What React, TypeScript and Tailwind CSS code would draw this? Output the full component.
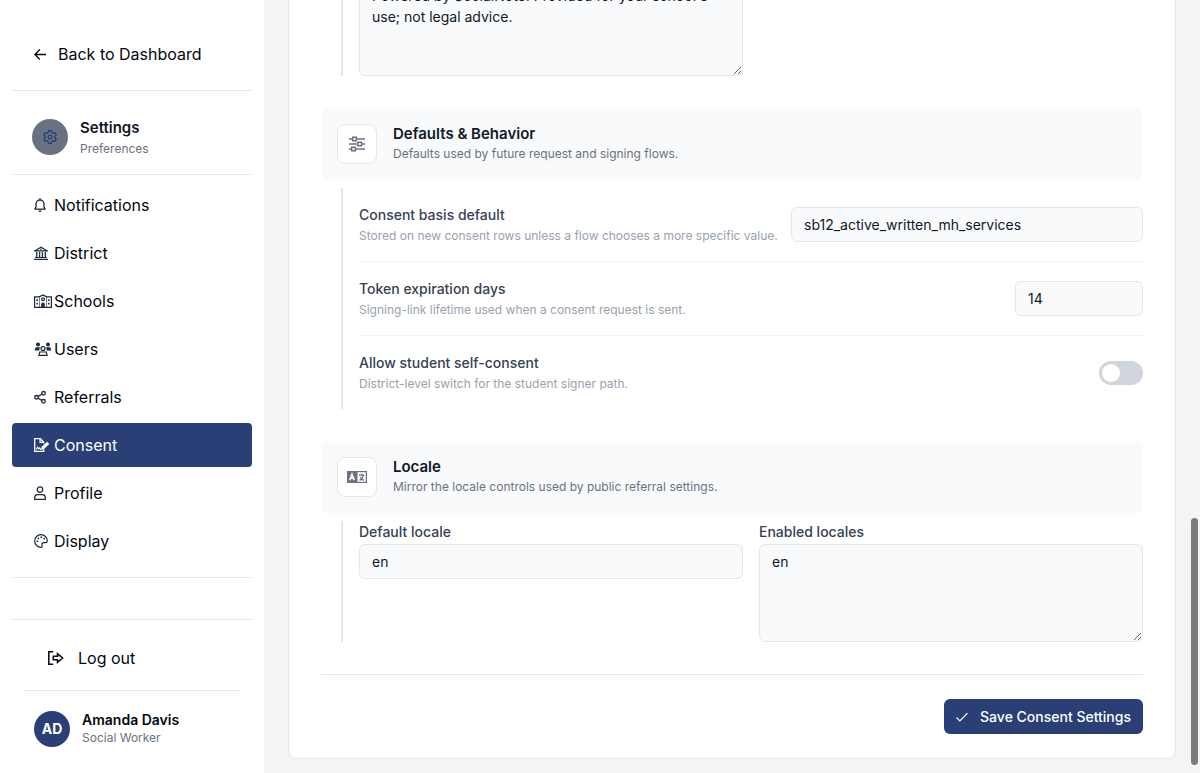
import { useLayoutEffect, useRef, type ReactNode } from 'react';
import { clsx } from 'clsx';

interface IconProps {
  width?: number;
  height?: number;
  strokeWidth?: number;
  children: ReactNode;
}

function Icon({ width = 14, height = 14, strokeWidth = 1.2, children }: IconProps) {
  return (
    <svg
      width={width}
      height={height}
      viewBox={`0 0 ${width} ${height}`}
      fill="none"
      stroke="currentColor"
      strokeWidth={strokeWidth}
      className="shrink-0"
      aria-hidden="true"
    >
      {children}
    </svg>
  );
}

const ArrowLeftIcon = () => (
  <Icon width={12} strokeWidth={1.3}>
    <path d="M12 7.5H1M5.8 2.5L.9 7.5l4.9 5" />
  </Icon>
);

const GearIcon = () => (
  <Icon strokeWidth={1.3}>
    <path
      strokeLinejoin="round"
      d="M5.6.7h2.8l.4 1.8 1.2.7 1.8-.6 1.4 2.4-1.4 1.3v1.4l1.4 1.3-1.4 2.4-1.8-.6-1.2.7-.4 1.8H5.6l-.4-1.8-1.2-.7-1.8.6L.8 9l1.4-1.3V6.3L.8 5l1.4-2.4 1.8.6 1.2-.7z"
    />
    <circle cx="7" cy="7" r="1.9" />
  </Icon>
);

const BellIcon = () => (
  <Icon width={12} strokeWidth={1.3}>
    <path d="M6 .2v1.500" />
    <path d="M.8 11.200h10.400L10 9.200V6a4 4 0 0 0-8 0v3.200z" strokeLinejoin="round" />
    <path d="M4.500 12.500h3a1.500 1.500 0 0 1-3 0z" fill="currentColor" stroke="none" />
  </Icon>
);

const BankIcon = () => (
  <Icon strokeWidth={1.2}>
    <path d="M1 4.800L7 1.300l6 3.500zM0 4.900h14M1.200 11.500h11.600M0 13.300h14" />
    <path d="M2.700 6v5M5.600 6v5M8.400 6v5M11.300 6v5" strokeWidth="1.300" />
    <circle cx="7" cy="3.300" r=".8" fill="currentColor" stroke="none" />
  </Icon>
);

const SchoolIcon = () => (
  <Icon width={18} strokeWidth={1.2}>
    <path d="M.6 2.800h4.600L9 .9l3.800 1.900h4.600v10.600H.6z" />
    <path d="M5.500 3v10.200M12.500 3v10.200" strokeWidth=".6" />
    <circle cx="9" cy="5.200" r="1.400" />
    <path d="M3.200 5.200v1.700M3.200 8.800v1.700M14.800 5.200v1.700M14.800 8.800v1.700" strokeWidth="1.500" />
    <path d="M7.200 13.400v-3a1.800 1.800 0 0 1 3.600 0v3z" fill="currentColor" stroke="none" />
  </Icon>
);

const UsersIcon = () => (
  <Icon width={18} strokeWidth={1.2}>
    <g fill="currentColor" stroke="none">
      <circle cx="4" cy="2.500" r="2" />
      <circle cx="14" cy="2.500" r="2" />
      <path d="M.6 8.500l1.100-3.300h3.800l.4.500-.8 2.800zM17.400 8.500l-1.100-3.300h-3.800l-.4.500.8 2.800z" />
    </g>
    <circle cx="9" cy="6.600" r="2" />
    <path d="M5.700 10h6.600l.8 3.300H4.900z" />
  </Icon>
);

const ShareIcon = () => (
  <Icon width={12} strokeWidth={1.3}>
    <circle cx="2.500" cy="7.300" r="1.800" />
    <circle cx="9.500" cy="3.300" r="1.800" />
    <circle cx="9.500" cy="11.300" r="1.800" />
    <path d="M4.100 6.400l3.700-2.200M4.100 8.200l3.700 2.200" />
  </Icon>
);

const ConsentIcon = () => (
  <Icon width={16} strokeWidth={1.300}>
    <path d="M9.700 11.200v2.100H.7V.7h5.600l3.400 3.400v1.500" />
    <path d="M6.100.7v3.600h3.600" />
    <path d="M2.300 11.400l1.300-2.200 1.200 1.700.9-1 .9 1.200h2" strokeWidth="1.100" />
    <path d="M7.600 8.700l5.600-4.900 2.100 2.100-5.400 5.100-2.300.3z" fill="currentColor" stroke="none" />
  </Icon>
);

const ProfileIcon = () => (
  <Icon width={12} strokeWidth={1.3}>
    <circle cx="6" cy="3.600" r="2.700" />
    <path d="M.7 13.300V12c0-2 1-3.400 2.600-3.400h5.400c1.600 0 2.600 1.400 2.600 3.400v1.300z" />
  </Icon>
);

const PaletteIcon = () => (
  <Icon strokeWidth={1.2}>
    <path d="M7 .7a6.300 6.300 0 1 0 0 12.600c1.300 0 1.400-1 1-2-.5-1.500.3-2.600 1.800-2.600h1.900c1 0 1.600-.6 1.600-1.700C13.300 3.400 10.500.7 7 .7z" />
    <g fill="currentColor" stroke="none">
      <circle cx="3.400" cy="7.300" r=".9" />
      <circle cx="4.400" cy="4.400" r=".9" />
      <circle cx="7.300" cy="3.200" r=".9" />
      <circle cx="10.200" cy="4.700" r=".9" />
    </g>
  </Icon>
);

const LogoutIcon = () => (
  <Icon width={16} strokeWidth={1.5}>
    <path d="M5.200.8H.8v12.400h4.400" />
    <path d="M5.300 5.300h4.200V2.700L14.600 7l-5.100 4.300V8.700H5.300z" />
  </Icon>
);

const SlidersIcon = () => (
  <Icon width={18} height={16} strokeWidth={1.5}>
    <path d="M1 3h3.500M8.500 3H17M1 8h8.500M13.500 8H17M1 13h2.500M7.500 13H17" />
    <path d="M4.700 1.200h3.600v3.600H4.700zM9.900 6.200h3.600v3.600H9.900zM3.700 11.200h3.600v3.600H3.700z" />
  </Icon>
);

const LocaleIcon = () => (
  <Icon width={20} height={12} strokeWidth={1.2}>
    <path d="M0 0h20v12H0z" fill="currentColor" stroke="none" />
    <path d="M10.500 1.200h8.300v9.600h-8.300z" fill="#fff" stroke="none" />
    <path d="M2.700 9.200L5 3.200l2.300 6M3.500 7.300h3" stroke="#fff" strokeWidth="1.500" />
    <path d="M14.700 2.400v1.400M12 4.100h5.400M12.600 9.400c2-1 3.300-2.700 3.700-5.200M13.300 6c.7 1.600 2 2.800 3.700 3.400" />
  </Icon>
);

const CheckIcon = () => (
  <Icon width={12} strokeWidth={1.2}>
    <path d="M.5 7.500l3.400 3.400L11.500 3.200" />
  </Icon>
);

const navItems = [
  { label: 'Notifications', icon: <BellIcon /> },
  { label: 'District', icon: <BankIcon /> },
  { label: 'Schools', icon: <SchoolIcon /> },
  { label: 'Users', icon: <UsersIcon /> },
  { label: 'Referrals', icon: <ShareIcon /> },
  { label: 'Consent', icon: <ConsentIcon />, active: true },
  { label: 'Profile', icon: <ProfileIcon /> },
  { label: 'Display', icon: <PaletteIcon /> },
];

function Sidebar() {
  return (
    <aside className="flex w-66 shrink-0 flex-col overflow-y-auto bg-white px-3 pt-8">
      <div className="border-b border-gray-200 pb-3.5">
        <a href="#dashboard" className="flex h-11 items-center gap-3 pl-[22px] text-gray-950">
          <ArrowLeftIcon />
          Back to Dashboard
        </a>
      </div>

      <div className="flex h-21 items-center gap-3 border-b border-gray-200 pt-2 pl-5">
        <div className="flex size-9 items-center justify-center rounded-full bg-gray-500 text-[#293f75]">
          <GearIcon />
        </div>
        <div className="pt-0.5">
          <div className="text-[15px] leading-[21px] font-semibold text-gray-900">Settings</div>
          <div className="text-xs leading-[21px] text-gray-500">Preferences</div>
        </div>
      </div>

      <nav className="flex flex-col gap-1 border-b border-gray-200 pt-2 pb-3.5">
        {navItems.map((item) => (
          <a
            key={item.label}
            href={`#${item.label.toLowerCase()}`}
            aria-current={item.active ? 'page' : undefined}
            className={clsx(
              'flex h-11 items-center rounded pl-[22px]',
              item.active ? 'bg-[#293f75] text-white' : 'text-gray-950'
            )}
          >
            <span className={clsx('flex w-5 shrink-0', !item.active && 'text-gray-800')}>{item.icon}</span>
            {item.label}
          </a>
        ))}
      </nav>

      <div className="mt-auto border-t border-gray-200 px-3 pt-4">
        <button type="button" className="flex h-11 w-full items-center gap-3.5 pl-6 text-gray-950">
          <LogoutIcon />
          Log out
        </button>
        <div className="mt-2.5 flex items-center gap-3 border-t border-gray-200 pt-5 pb-6.5 pl-2.5">
          <div className="flex size-9 items-center justify-center rounded-full bg-[#293f75] text-sm font-bold text-white">
            AD
          </div>
          <div>
            <div className="text-sm leading-[18px] font-semibold text-gray-950">Amanda Davis</div>
            <div className="text-xs leading-[18px] text-gray-500">Social Worker</div>
          </div>
        </div>
      </div>
    </aside>
  );
}

interface SectionHeaderProps {
  icon: ReactNode;
  title: string;
  description: string;
}

function SectionHeader({ icon, title, description }: SectionHeaderProps) {
  return (
    <div className="mb-2 flex items-center gap-4 rounded-lg bg-[#f9fafb] p-4">
      <div className="flex size-10 items-center justify-center rounded-lg border border-gray-200 bg-white text-gray-500">
        {icon}
      </div>
      <div>
        <h2 className="text-[15px] leading-5 font-semibold text-gray-900">{title}</h2>
        <p className="text-xs leading-5 text-gray-500">{description}</p>
      </div>
    </div>
  );
}

interface SettingRowProps {
  id: string;
  label: string;
  description: string;
  children: ReactNode;
}

function SettingRow({ id, label, description, children }: SettingRowProps) {
  return (
    <div className="flex items-center justify-between gap-3 py-4">
      <div>
        <label htmlFor={id} className="block text-sm leading-[21px] font-medium text-gray-700">
          {label}
        </label>
        <p className="mt-0.5 text-xs leading-[18px] text-gray-400">{description}</p>
      </div>
      {children}
    </div>
  );
}

const fieldClass =
  'rounded-md border border-gray-200 bg-[#f9fafb] px-3 py-1.5 text-sm leading-[21px] text-gray-900';

export default function App() {
  const scrollRef = useRef<HTMLDivElement>(null);

  useLayoutEffect(() => {
    const el = scrollRef.current;
    if (el) el.scrollTop = el.scrollHeight;
  }, []);

  return (
    <div className="flex h-screen bg-[#f4f4f4] font-['Inter',sans-serif] text-base">
      <Sidebar />

      <main className="relative min-w-0 flex-1">
        <div ref={scrollRef} className="h-full overflow-y-auto px-6 pt-6 pb-3.5 [scrollbar-width:none]">
          <form className="rounded-lg border border-gray-200 bg-white px-8 pt-8 pb-6">
            <div className="flex flex-col gap-8">
              <section className="ml-5 grid grid-cols-2 gap-4 border-l-2 border-gray-200 pl-4">
                <textarea
                  aria-label="Footer text"
                  rows={4}
                  className={clsx(fieldClass, 'block w-full')}
                  defaultValue="Powered by SocialNote. Provided for your school's use; not legal advice."
                />
              </section>

              <section>
                <SectionHeader
                  icon={<SlidersIcon />}
                  title="Defaults & Behavior"
                  description="Defaults used by future request and signing flows."
                />
                <div className="ml-5 divide-y divide-gray-100 border-l-2 border-gray-200 pl-4">
                  <SettingRow
                    id="consent-basis"
                    label="Consent basis default"
                    description="Stored on new consent rows unless a flow chooses a more specific value."
                  >
                    <input
                      id="consent-basis"
                      type="text"
                      defaultValue="sb12_active_written_mh_services"
                      className={clsx(fieldClass, 'w-88 shrink-0')}
                    />
                  </SettingRow>
                  <SettingRow
                    id="token-days"
                    label="Token expiration days"
                    description="Signing-link lifetime used when a consent request is sent."
                  >
                    <input
                      id="token-days"
                      type="number"
                      defaultValue={14}
                      className={clsx(fieldClass, 'w-32 shrink-0')}
                    />
                  </SettingRow>
                  <SettingRow
                    id="self-consent"
                    label="Allow student self-consent"
                    description="District-level switch for the student signer path."
                  >
                    <input
                      id="self-consent"
                      type="checkbox"
                      role="switch"
                      className="flex h-6 w-11 shrink-0 appearance-none items-center rounded-full bg-gray-300 px-[3px] before:size-[18px] before:rounded-full before:bg-white checked:justify-end checked:bg-[#293f75]"
                    />
                  </SettingRow>
                </div>
              </section>

              <section>
                <SectionHeader
                  icon={<LocaleIcon />}
                  title="Locale"
                  description="Mirror the locale controls used by public referral settings."
                />
                <div className="ml-5 grid grid-cols-2 items-start gap-4 border-l-2 border-gray-200 pl-4">
                  <div className="flex flex-col gap-0.5">
                    <label htmlFor="default-locale" className="text-sm leading-[21px] font-medium text-gray-700">
                      Default locale
                    </label>
                    <input
                      id="default-locale"
                      type="text"
                      defaultValue="en"
                      className={clsx(fieldClass, 'w-full')}
                    />
                  </div>
                  <div className="flex flex-col gap-0.5">
                    <label htmlFor="enabled-locales" className="text-sm leading-[21px] font-medium text-gray-700">
                      Enabled locales
                    </label>
                    <textarea
                      id="enabled-locales"
                      rows={4}
                      defaultValue="en"
                      className={clsx(fieldClass, 'w-full')}
                    />
                  </div>
                </div>
              </section>

              <div className="flex justify-end border-t border-gray-200 pt-6">
                <button
                  type="button"
                  className="flex h-[35px] items-center gap-3 rounded-md bg-[#293f75] px-3 text-sm font-medium text-white"
                >
                  <CheckIcon />
                  Save Consent Settings
                </button>
              </div>
            </div>
          </form>
        </div>

        {/* overlay scrollbar thumb */}
        <div className="absolute right-0.5 bottom-2 h-[32%] w-[7px] rounded-full bg-[#7b7b7b]" />
      </main>
    </div>
  );
}
